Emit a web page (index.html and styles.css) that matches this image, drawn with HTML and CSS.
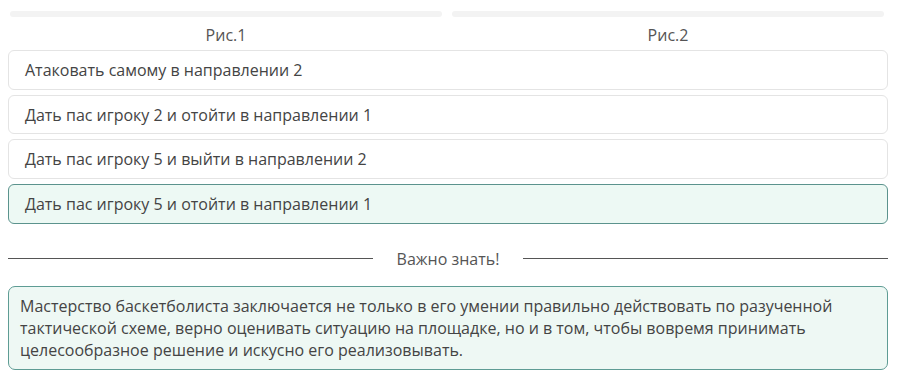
FILE: index.html
```html
<!DOCTYPE html>
<html lang="ru">
<head>
<meta charset="utf-8">
<link rel="stylesheet" href="styles.css">
</head>
<body>
<div class="page">
  <div class="figs">
    <div class="fig"><div class="fig-img"></div><div class="fig-cap">Рис.1</div></div>
    <div class="fig"><div class="fig-img"></div><div class="fig-cap">Рис.2</div></div>
  </div>
  <div class="options">
    <div class="opt">Атаковать самому в направлении 2</div>
    <div class="opt">Дать пас игроку 2 и отойти в направлении 1</div>
    <div class="opt">Дать пас игроку 5 и выйти в направлении 2</div>
    <div class="opt opt-sel">Дать пас игроку 5 и отойти в направлении 1</div>
  </div>
  <div class="divider"><span class="line"></span><span class="div-text">Важно знать!</span><span class="line"></span></div>
  <div class="info">Мастерство баскетболиста заключается не только в его умении правильно действовать по разученной тактической схеме, верно оценивать ситуацию на площадке, но и в том, чтобы вовремя принимать целесообразное решение и искусно его реализовывать.</div>
</div>
</body>
</html>
```

FILE: styles.css
```css
html, body { margin: 0; padding: 0; background: #fff; }
body { font-family: "Open Sans", "Noto Sans", sans-serif; color: #444; font-size: 16px; }
.page { padding: 0 9px 0 8px; }
.figs { display: flex; gap: 10px; padding: 0 4px 0 2px; }
.fig { flex: 1; display: flex; flex-direction: column; align-items: center; }
.fig-img { align-self: stretch; height: 6px; margin-top: 11px; background: #f3f3f3; border-radius: 3px; }
.fig-cap { margin-top: 7px; height: 26px; line-height: 23px; color: #555; }
.options { display: flex; flex-direction: column; gap: 5.2px; }
.opt { height: 37.5px; line-height: 38.5px; border: 1px solid #e4e4e4; border-radius: 6px; padding: 0 16px; color: #444; }
.opt-sel { background: #edf9f4; border-color: #5b938d; }
.divider { display: flex; align-items: center; margin-top: 23px; height: 24px; }
.line { flex: 1; height: 1px; background: #555; }
.div-text { padding: 0 24px; color: #555; }
.info { margin-top: 15px; border: 1px solid #5e9c94; background: #eef8f4; border-radius: 7px; padding: 8px 11px 8px; line-height: 22px; color: #444; }
```
